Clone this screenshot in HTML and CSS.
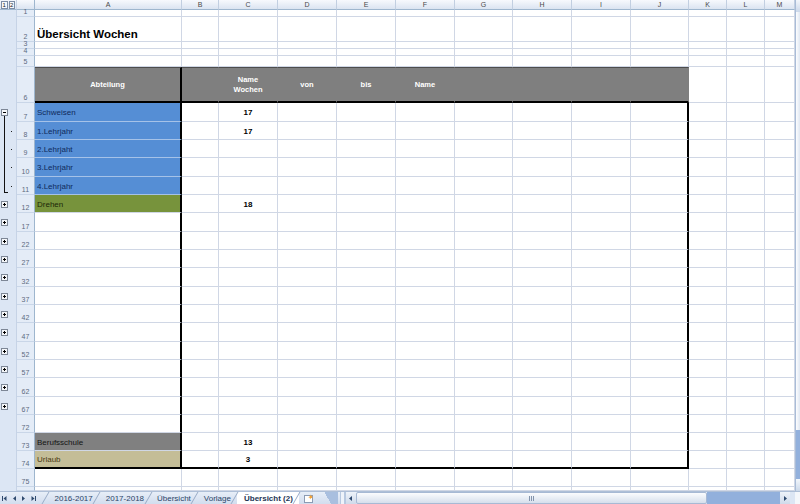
FILE: index.html
```html
<!DOCTYPE html>
<html>
<head>
  <meta charset="utf-8">
  <title>Übersicht (2)</title>
  <meta name="viewport" content="width=device-width, initial-scale=1">
  <link rel="stylesheet" href="styles.css">
</head>
<body>
  <div class="window">
    <div class="main">
      <div class="grid" id="grid"></div>
      <div class="vscroll">
        <div class="vs-btn"></div>
        <div class="vs-thumb"></div>
        <div class="vs-track"></div>
        <div class="vs-btn"></div>
      </div>
    </div>

    <div class="tabbar">
      <div class="tab-nav">
        <svg width="40" height="13" viewBox="0 0 40 13">
          <rect x="2" y="4" width="1" height="5" fill="#2f4a6e"/>
          <polygon points="3.5,6.5 6.5,4 6.5,9" fill="#2f4a6e"/>
          <polygon points="13,6.5 16,4 16,9" fill="#2f4a6e"/>
          <polygon points="25,6.5 22,4 22,9" fill="#2f4a6e"/>
          <polygon points="34.5,6.5 31.5,4 31.5,9" fill="#2f4a6e"/>
          <rect x="35" y="4" width="1" height="5" fill="#2f4a6e"/>
        </svg>
      </div>
      <div class="tabs">
        <span class="tab">2016-2017</span>
        <span class="tab">2017-2018</span>
        <span class="tab">Übersicht</span>
        <span class="tab">Vorlage</span>
        <span class="tab active">Übersicht (2)</span>
        <span class="tab tab-new">
          <svg width="10" height="9" viewBox="0 0 10 9">
            <rect x="0.5" y="1.5" width="8" height="7" fill="#fff" stroke="#8b9bb4"/>
            <path d="M6 0.5l1 1.5 1.8-0.4-1 1.4 1 1.3-1.8-0.2-1 1.4-0.2-1.7-1.6-0.6 1.6-0.7z" fill="#f2a33a"/>
          </svg>
        </span>
        <span class="tab-rest"></span>
      </div>
      <div class="hscroll">
        <div class="hs-split"></div>
        <div class="hs-btn">
          <svg width="10" height="13" viewBox="0 0 10 13"><polygon points="3,6.5 6,4 6,9" fill="#2f4a6e"/></svg>
        </div>
        <div class="hs-thumb"><span class="grip"></span></div>
        <div class="hs-track"></div>
        <div class="hs-btn">
          <svg width="10" height="13" viewBox="0 0 10 13"><polygon points="7,6.5 4,4 4,9" fill="#2f4a6e"/></svg>
        </div>
        <div class="hs-end"></div>
      </div>
    </div>
  </div>

<script>
  var cols = ['A', 'B', 'C', 'D', 'E', 'F', 'G', 'H', 'I', 'J', 'K', 'L', 'M'];
  var rows = [1, 2, 3, 4, 5, 6, 7, 8, 9, 10, 11, 12, 17, 22, 27, 32, 37, 42, 47, 52, 57, 62, 67, 72, 73, 74, 75, 76];

  // row -> column -> [text, extra class]
  var data = {
    2:  { A: ['Übersicht Wochen', 'title'] },
    6:  { A: ['Abteilung'], C: ['Name<br>Wochen'], D: ['von'], E: ['bis'], F: ['Name'] },
    7:  { A: ['Schweisen', 'blue'], C: ['17', 'num'] },
    8:  { A: ['1.Lehrjahr', 'blue'], C: ['17', 'num'] },
    9:  { A: ['2.Lehrjaht', 'blue'] },
    10: { A: ['3.Lehrjahr', 'blue'] },
    11: { A: ['4.Lehrjahr', 'blue'] },
    12: { A: ['Drehen', 'green'], C: ['18', 'num'] },
    73: { A: ['Berufsschule', 'gray'], C: ['13', 'num'] },
    74: { A: ['Urlaub', 'tan'], C: ['3', 'num'] }
  };

  var plus = '<svg width="7" height="7" viewBox="0 0 7 7"><rect x="0.5" y="0.5" width="6" height="6" fill="#f4f6f9" stroke="#7d8796"/><path d="M2 3.5h3M3.5 2v3" stroke="#000"/></svg>';
  var minus = '<svg width="7" height="7" viewBox="0 0 7 7"><rect x="0.5" y="0.5" width="6" height="6" fill="#f4f6f9" stroke="#7d8796"/><path d="M2 3.5h3" stroke="#000"/></svg>';

  var grid = document.getElementById('grid');

  function add(cls, html) {
    var d = document.createElement('div');
    d.className = cls;
    if (html) d.innerHTML = html;
    grid.appendChild(d);
  }

  // column headers
  add('ol corner', '<span class="lvl">1</span><span class="lvl">2</span>');
  add('ch all');
  cols.forEach(function (c) { add('ch', c); });

  rows.forEach(function (r) {
    var ol = 'ol';
    var olHtml = '';
    if (r === 7) { ol += ' ol-start'; olHtml = minus; }
    else if (r >= 8 && r <= 10) { ol += ' ol-mid'; olHtml = '<span class="dot"></span>'; }
    else if (r === 11) { ol += ' ol-end'; olHtml = '<span class="dot"></span>'; }
    else if (r >= 12 && r <= 67) { olHtml = plus; }
    add(ol, olHtml);
    // row 76 is only a sliver, its number is hidden under the tabs
    add('rh', r < 76 ? String(r) : '');

    cols.forEach(function (c, i) {
      var cls = 'cell';
      var cell = (data[r] || {})[c];
      if (r === 6 && i <= 9) cls += ' hdr';
      if (cell && cell[1]) cls += ' ' + cell[1];
      if (c === 'A' && r >= 6 && r <= 74) cls += ' edge-a';
      if (c === 'J' && r >= 7 && r <= 74) cls += ' edge-j';
      if (r === 74 && i <= 9) cls += ' edge-b';
      add(cls, cell ? cell[0] : '');
    });
  });
</script>
</body>
</html>
```

FILE: styles.css
```css
* {
  box-sizing: border-box;
}

html, body {
  margin: 0;
  padding: 0;
  background: #fff;
  font-family: "Liberation Sans", Arial, sans-serif;
}

.window {
  width: 800px;
  height: 504px;
  overflow: hidden;
  display: flex;
  flex-direction: column;
}

.main {
  display: flex;
  height: 491px;
}

/* sheet */
.grid {
  width: 795px;
  display: grid;
  grid-template-columns: 17px 18px 147px 37px 59px 59px 59px 59px 58px 59px 59px 58px 38px 38px 30px;
  grid-template-rows:
    10px 7px 25px 7px 7px 11px 36px
    19px 18px 18px 19px 18px 18px
    19px 18px 18px 19px 18px 18px 19px 18px 18px 19px 18px 18px
    18px 18px 18px 4px;
}

.ol {
  background: #dce6f4;
  border-right: 1px solid #c6d3e6;
  display: flex;
  align-items: center;
  padding-left: 1px;
}

.ol svg {
  display: block;
}

.ol.corner {
  padding-top: 1px;
  background: linear-gradient(#f4f7fc, #d9e3f1);
  border-bottom: 1px solid #9eb6ce;
}

.lvl {
  width: 7px;
  height: 8px;
  border: 1px solid #7d8da6;
  background: #f5f8fc;
  font-size: 6px;
  line-height: 6px;
  text-align: center;
  color: #1a1a1a;
  margin-right: 1px;
}

.ol-start {
  background: linear-gradient(#111, #111) no-repeat 4px 13px / 1px 6px, #dce6f4;
}

.ol-mid {
  background: linear-gradient(#111, #111) no-repeat 4px 0 / 1px 100%, #dce6f4;
  padding-left: 11px;
}

.ol-end {
  background:
    linear-gradient(#111, #111) no-repeat 4px 0 / 1px 16px,
    linear-gradient(#111, #111) no-repeat 4px 15px / 4px 1px,
    #dce6f4;
  padding-left: 11px;
}

.dot {
  width: 1px;
  height: 1px;
  background: #222;
}

.ch {
  background: linear-gradient(#f7f9fd, #dbe4f1);
  border-right: 1px solid #c2cfe1;
  border-bottom: 1px solid #9eb6ce;
  display: flex;
  align-items: center;
  justify-content: center;
  font-size: 7px;
  line-height: 9px;
  color: #4a4a4a;
}

.ch.all {
  border-right-color: #9eb6ce;
}

.rh {
  background: #e4ecf7;
  border-right: 1px solid #9eb6ce;
  border-bottom: 1px solid #c9d6e8;
  display: flex;
  align-items: flex-end;
  justify-content: center;
  padding-bottom: 1px;
  font-size: 7px;
  line-height: 6px;
  color: #5c6b80;
}

.cell {
  background: #fff;
  border-right: 1px solid #d0d7e5;
  border-bottom: 1px solid #d0d7e5;
  display: flex;
  align-items: center;
  padding: 1px 2px 0;
  font-size: 8px;
  line-height: 9px;
  white-space: nowrap;
  overflow: hidden;
}

.title {
  overflow: visible;
  align-items: flex-end;
  padding: 0 2px;
  font-size: 11.5px;
  line-height: 13px;
  font-weight: bold;
}

.hdr {
  background: #7f7f7f;
  border-top: 1px solid #4d4d4d;
  border-right-color: #7f7f7f;
  border-bottom: 2px solid #000;
  justify-content: center;
  text-align: center;
  padding: 0;
  color: #fff;
  font-weight: bold;
  font-size: 7.5px;
  line-height: 10px;
}

.num {
  justify-content: center;
  font-weight: bold;
}

.blue {
  background: #558ed5;
  border-bottom-color: #a5c2e8;
  color: #0f2a5c;
}

.green {
  background: #77933c;
  color: #1c2808;
}

.gray {
  background: #808080;
  color: #141414;
}

.tan {
  background: #c4bd97;
  color: #4a3a12;
}

.edge-a,
.edge-j {
  border-right: 2px solid #000;
}

.edge-b {
  border-bottom: 2px solid #000;
}

/* vertical scrollbar */
.vscroll {
  width: 5px;
  display: flex;
  flex-direction: column;
  border-left: 1px solid #a9bcd7;
  background: #dbe5f3;
}

.vs-btn {
  height: 12px;
  background: linear-gradient(#f2f6fb, #cbd8ea);
}

.vs-thumb {
  height: 418px;
  background: linear-gradient(90deg, #fdfdfe, #dfe7f2);
}

.vs-track {
  flex: 1;
  background: #92b0dc;
}

/* sheet tabs */
.tabbar {
  height: 13px;
  display: flex;
  background: linear-gradient(#e7eef8, #d2ddee);
  border-top: 1px solid #aebfd7;
  font-size: 8px;
  color: #2b4467;
}

.tab-nav {
  width: 48px;
  display: flex;
  align-items: center;
}

.tabs {
  display: flex;
}

.tab {
  position: relative;
  display: flex;
  align-items: center;
  padding: 0 6.5px;
  white-space: nowrap;
}

.tab::before {
  content: "";
  position: absolute;
  left: -3px;
  top: 0;
  bottom: 0;
  width: 1px;
  background: #98abc6;
  transform: skewX(-30deg);
}

.tab.active {
  background: #fff;
  font-weight: bold;
  color: #1d3454;
}

.tab-new {
  padding: 0 6px 0 5px;
}

.tab-rest {
  width: 16px;
  margin-left: 2px;
  background: linear-gradient(60deg, transparent 0 40%, #a9bfdf 40%);
}

.hscroll {
  margin-left: auto;
  width: 460px;
  display: flex;
  align-items: stretch;
}

.hs-split {
  width: 6px;
  background: linear-gradient(90deg, #b7c8e0 0 1px, #eef3fa 1px 4px, #b7c8e0 4px);
}

.hs-btn {
  width: 10px;
  background: linear-gradient(#eef3fa, #cfdaea);
}

.hs-btn svg {
  display: block;
}

.hs-thumb {
  width: 351px;
  border: 1px solid #a7b9d4;
  border-radius: 2px;
  background: linear-gradient(#fbfcfe, #d6dfec);
  display: flex;
  align-items: center;
  justify-content: center;
}

.grip {
  width: 5px;
  height: 5px;
  background: repeating-linear-gradient(90deg, #8394ad 0 1px, transparent 1px 2px);
}

.hs-track {
  flex: 1;
  background: #92b0dc;
}

.hs-end {
  width: 10px;
  background: linear-gradient(90deg, #dce6f4 0 5px, #f4f7fb 5px);
}
```
